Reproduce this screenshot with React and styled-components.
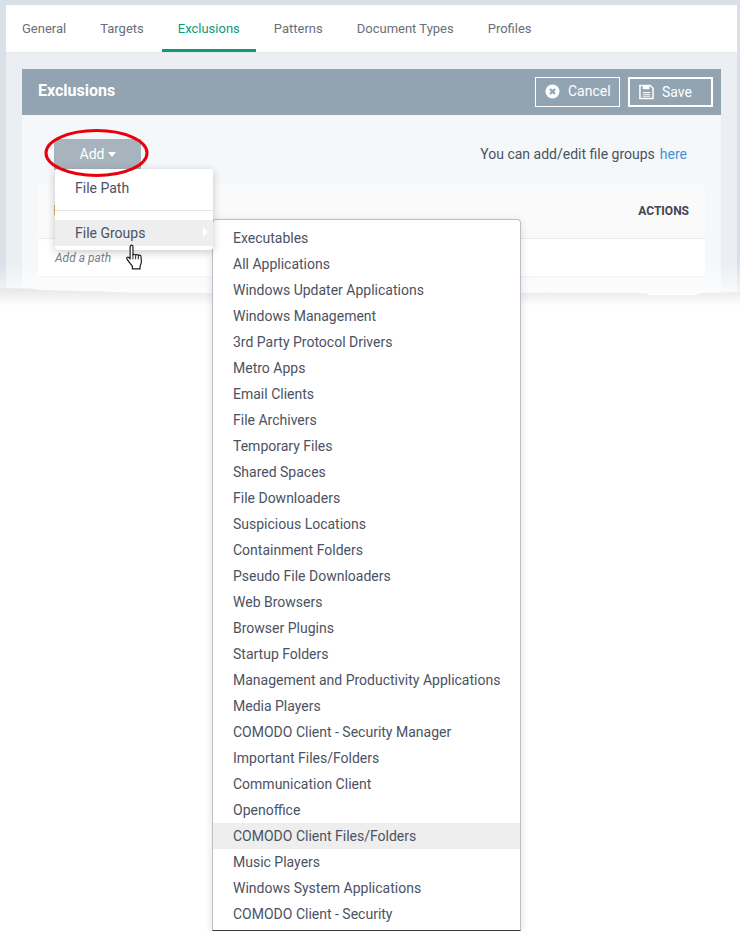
import React from "react";
import styled, { createGlobalStyle } from "styled-components";

const GlobalStyle = createGlobalStyle`
  html, body {
    margin: 0;
    padding: 0;
    background: #fff;
    font-family: Roboto, "Liberation Sans", sans-serif;
  }
  * {
    box-sizing: border-box;
  }
`;

const Page = styled.div`
  position: relative;
  width: 740px;
  height: 931px;
  overflow: hidden;
`;

const Shot = styled.div`
  display: flex;
  flex-direction: column;
  height: 294px;
  padding: 5px 3px 0 6px;
  background: #d9e0e8;
`;

const TabBar = styled.nav`
  display: flex;
  gap: 2px;
  height: 48px;
  background: #fff;
  border-bottom: 1px solid #e6e8ea;
`;

const Tab = styled.a`
  display: flex;
  align-items: center;
  height: 47px;
  padding: 3px 16px 1px;
  font-size: 13px;
  color: ${({ $active }) => ($active ? "#0d9a7a" : "#6a6f78")};
  border-bottom: 3px solid ${({ $active }) => ($active ? "#0d9a7a" : "transparent")};
`;

const Content = styled.div`
  flex: 1;
  padding: 16px 16px 0;
  background: #ebeff3;
`;

const Panel = styled.section`
  height: 100%;
  background: #f5f8fa;
`;

const PanelHeader = styled.header`
  display: flex;
  align-items: center;
  justify-content: space-between;
  height: 46px;
  padding: 0 8px 0 16px;
  background: #92a4b2;
`;

const PanelTitle = styled.h2`
  margin: 0 0 4px;
  font-size: 16px;
  font-weight: 700;
  color: #fff;
`;

const HeaderActions = styled.div`
  display: flex;
  gap: 8px;
`;

const HeaderButton = styled.button`
  display: flex;
  align-items: center;
  gap: 8px;
  width: 85px;
  height: 30px;
  padding: 0 0 ${({ $strong }) => ($strong ? "0" : "2px")} 9px;
  background: transparent;
  border: ${({ $strong }) => ($strong ? "2px" : "1px")} solid #fff;
  color: #fff;
  font-family: inherit;
  font-size: 14px;
`;

const PanelBody = styled.div`
  padding: 24px 16px 0;
`;

const Toolbar = styled.div`
  display: flex;
  align-items: flex-start;
  justify-content: space-between;
  height: 46px;
  padding: 0 18px 0 16px;
`;

const AddWrap = styled.div`
  position: relative;
  width: 87px;
`;

const AddButton = styled.button`
  display: flex;
  align-items: center;
  justify-content: center;
  gap: 4px;
  width: 87px;
  height: 31px;
  padding: 0 0 2px 1px;
  background: #a7b4bd;
  border: none;
  color: #fff;
  font-family: inherit;
  font-size: 14px;
`;

const Caret = styled.span`
  width: 0;
  height: 0;
  margin-top: 1px;
  border-left: 4.5px solid transparent;
  border-right: 4.5px solid transparent;
  border-top: 5px solid #fff;
`;

const Oval = styled.svg`
  position: absolute;
  left: -12px;
  top: -10px;
  z-index: 4;
  pointer-events: none;
`;

const AddMenu = styled.div`
  position: absolute;
  left: 1px;
  top: 30px;
  z-index: 3;
  width: 158px;
  height: 81px;
  padding-top: 6px;
  background: #fff;
  border-radius: 3px;
  box-shadow: 0 2px 8px rgba(0, 0, 0, 0.22);
`;

const AddItem = styled.div`
  display: flex;
  align-items: center;
  height: 26px;
  padding-left: 20px;
  font-size: 14px;
  color: #4b5262;
  background: ${({ $active }) => ($active ? "#eeeeee" : "transparent")};
`;

const MenuDivider = styled.div`
  height: 1px;
  margin: 9px 0;
  background: #e4e4e4;
`;

const SubArrow = styled.span`
  position: absolute;
  right: 5px;
  top: 58px;
  width: 0;
  height: 0;
  border-top: 5px solid transparent;
  border-bottom: 5px solid transparent;
  border-left: 5px solid #fff;
`;

const HandCursor = styled.svg`
  position: absolute;
  left: 70px;
  top: 75px;
  z-index: 5;
`;

const HelpText = styled.p`
  display: flex;
  gap: 5px;
  margin: 7px 0 0;
  font-size: 14px;
  color: #4a5160;
`;

const HelpLink = styled.a`
  color: #4a90d4;
`;

const Table = styled.div`
  background: #fff;
`;

const TableHead = styled.div`
  display: flex;
  align-items: center;
  justify-content: flex-end;
  height: 54px;
  padding: 0 16px 1px;
  background: #fafafa;
  border-bottom: 1px solid #ebebeb;
  font-size: 12px;
  font-weight: 700;
  color: #3f4656;
`;

const Marker = styled.span`
  position: absolute;
  left: 54px;
  top: 205px;
  width: 2px;
  height: 10px;
  background: #eda85b;
`;

const TableRow = styled.div`
  display: flex;
  align-items: center;
  height: 38px;
  padding: 0 0 0 17px;
  border-bottom: 1px solid #efefef;
  font-size: 12px;
  font-style: italic;
  color: #7b818b;
`;

const TornEdge = styled.svg`
  position: absolute;
  left: 0;
  top: 262px;
  z-index: 1;
`;

const SubMenu = styled.ul`
  position: absolute;
  left: 212px;
  top: 219px;
  z-index: 2;
  width: 309px;
  height: 712px;
  margin: 0;
  padding: 5px 0 0;
  list-style: none;
  background: #fff;
  border: 1px solid #b9c0c9;
  border-bottom-color: #33373d;
  border-radius: 4px 4px 0 0;
  box-shadow: 0 2px 10px rgba(0, 0, 0, 0.12);
`;

const SubItem = styled.li`
  display: flex;
  align-items: center;
  height: 26px;
  padding-left: 20px;
  font-size: 14px;
  color: #4b5262;
  background: ${({ $active }) => ($active ? "#eeeeee" : "transparent")};
`;

const tabs = ["General", "Targets", "Exclusions", "Patterns", "Document Types", "Profiles"];

const fileGroups = [
  "Executables",
  "All Applications",
  "Windows Updater Applications",
  "Windows Management",
  "3rd Party Protocol Drivers",
  "Metro Apps",
  "Email Clients",
  "File Archivers",
  "Temporary Files",
  "Shared Spaces",
  "File Downloaders",
  "Suspicious Locations",
  "Containment Folders",
  "Pseudo File Downloaders",
  "Web Browsers",
  "Browser Plugins",
  "Startup Folders",
  "Management and Productivity Applications",
  "Media Players",
  "COMODO Client - Security Manager",
  "Important Files/Folders",
  "Communication Client",
  "Openoffice",
  "COMODO Client Files/Folders",
  "Music Players",
  "Windows System Applications",
  "COMODO Client - Security",
];

function CancelIcon() {
  return (
    <svg width="15" height="15" viewBox="0 0 15 15">
      <circle cx="7.5" cy="7.5" r="7" fill="#fff" />
      <path d="M5 5l5 5M10 5l-5 5" stroke="#92a4b2" strokeWidth="2.2" />
    </svg>
  );
}

function SaveIcon() {
  return (
    <svg width="15" height="16" viewBox="0 0 16 16" fill="none" stroke="#fff" strokeWidth="1.6">
      <path d="M1 1h11l3 3v11H1z" />
      <path d="M4 1h7v4H4z" fill="#fff" stroke="none" />
      <path d="M4 8.500h8M4 10.500h8M4 12.500h8" strokeWidth="1" />
    </svg>
  );
}

function Hand() {
  return (
    <HandCursor width="20" height="27" viewBox="0 0 18 25">
      <path
        d="M4.500 2.200c0-1.600 2.600-1.600 2.600 0v8c0-.9 2.400-1 2.500.2.200-.9 2.400-.9 2.500.4.300-.8 2.300-.7 2.400.6l.4 4.600c.1 2-.6 3-1.200 4.500v2.600H6.600v-2.400C5 18.600 3.200 16.500 1.600 14c-.8-1.300.5-2.500 1.700-1.500l1.200 1.200z"
        fill="#fff"
        stroke="#1c1c1c"
        strokeWidth="1.100"
        strokeLinejoin="round"
      />
      <path d="M7.100 10.200v4M9.600 10.400v3.800M12.100 10.800v3.400" stroke="#1c1c1c" strokeWidth="0.900" fill="none" />
    </HandCursor>
  );
}

function Tear() {
  return (
    <TornEdge width="740" height="48" viewBox="0 0 740 48">
      <defs>
        <linearGradient id="fade" x1="0" y1="0" x2="0" y2="1">
          <stop offset="0" stopColor="#fff" stopOpacity="0" />
          <stop offset="1" stopColor="#fff" stopOpacity="0.7" />
        </linearGradient>
        <linearGradient id="shade" gradientUnits="userSpaceOnUse" x1="0" y1="28" x2="0" y2="44">
          <stop offset="0" stopColor="#e9e9e9" />
          <stop offset="1" stopColor="#fff" />
        </linearGradient>
      </defs>
      <rect width="740" height="32" fill="url(#fade)" />
      <path
        d="M0 26L30 26.500L40 28L100 29.500L140 31L210 31L300 30L440 31L520 31L545 30.500L645 31L650 33L695 33L700 31L740 30V48H0z"
        fill="url(#shade)"
      />
    </TornEdge>
  );
}

export default function App() {
  return (
    <>
      <GlobalStyle />
      <Page>
        <Shot>
          <TabBar>
            {tabs.map((tab) => (
              <Tab key={tab} $active={tab === "Exclusions"}>
                {tab}
              </Tab>
            ))}
          </TabBar>
          <Content>
            <Panel>
              <PanelHeader>
                <PanelTitle>Exclusions</PanelTitle>
                <HeaderActions>
                  <HeaderButton>
                    <CancelIcon />
                    Cancel
                  </HeaderButton>
                  <HeaderButton $strong>
                    <SaveIcon />
                    Save
                  </HeaderButton>
                </HeaderActions>
              </PanelHeader>
              <PanelBody>
                <Toolbar>
                  <AddWrap>
                    <AddButton>
                      Add <Caret />
                    </AddButton>
                    <Oval width="112" height="52" viewBox="0 0 112 52">
                      <ellipse cx="54.500" cy="24" rx="50.500" ry="22.500" fill="none" stroke="#e8000f" strokeWidth="3" />
                    </Oval>
                    <AddMenu>
                      <AddItem>File Path</AddItem>
                      <MenuDivider />
                      <AddItem $active>File Groups</AddItem>
                      <SubArrow />
                      <Hand />
                    </AddMenu>
                  </AddWrap>
                  <HelpText>
                    You can add/edit file groups <HelpLink>here</HelpLink>
                  </HelpText>
                </Toolbar>
                <Table>
                  <TableHead>ACTIONS</TableHead>
                  <TableRow>Add a path</TableRow>
                </Table>
              </PanelBody>
            </Panel>
          </Content>
        </Shot>
        <Marker />
        <Tear />
        <SubMenu>
          {fileGroups.map((group) => (
            <SubItem key={group} $active={group === "COMODO Client Files/Folders"}>
              {group}
            </SubItem>
          ))}
        </SubMenu>
      </Page>
    </>
  );
}
